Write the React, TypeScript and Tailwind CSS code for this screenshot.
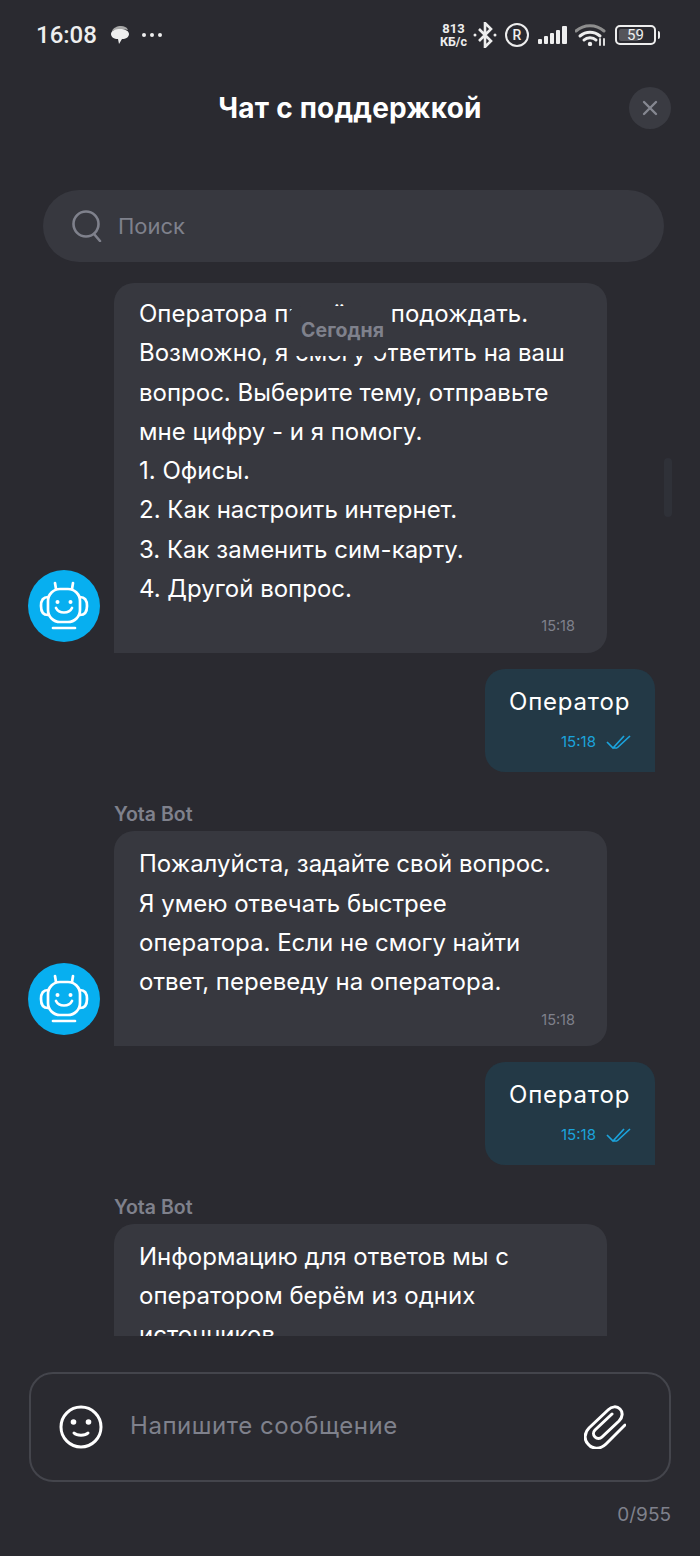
import React from 'react';

const FONT = "font-['Inter',sans-serif]";

const BotAvatar: React.FC = () => (
  <div className="w-[72px] h-[72px] rounded-full bg-[#07aff0] shrink-0">
    <svg width="72" height="72" viewBox="0 0 72 72" fill="none" stroke="white" strokeWidth="2.7" strokeLinecap="round">
      <path d="M27 13l1 6M45 13l-1 6" />
      <rect x="20" y="19" width="32" height="33" rx="12" />
      <path d="M20 27c-5 0-7 4-7 9s2 9 7 9M52 27c5 0 7 4 7 9s-2 9-7 9" />
      <circle cx="29.5" cy="32" r="2" fill="white" stroke="none" />
      <circle cx="42.5" cy="32" r="2" fill="white" stroke="none" />
      <path d="M28 38c3 6 13 6 16 0" />
      <path d="M25 58h22" />
    </svg>
  </div>
);

const BotMessage: React.FC<{ lines: string[]; time?: string; name?: boolean; clipped?: boolean; first?: boolean }> = ({ lines, time, name, clipped, first }) => (
  <div className="flex flex-col pl-[28px]">
    {name && <div className="ml-[86px] mb-[10px] h-[13px] leading-[13px] text-[19.5px] font-semibold text-[#7f818c]">Yota Bot</div>}
    <div className="flex items-end">
      <div className="w-[86px] shrink-0 pb-[11px]">{!clipped && <BotAvatar />}</div>
      <div className={`w-[493px] bg-[#37383f] pl-[25px] pr-[32px] rounded-tl-[20px] rounded-tr-[20px] rounded-br-[20px] ${first ? 'pt-[11px] pb-[17px]' : 'pt-[13px] pb-[16px]'} ${clipped ? 'pb-0' : ''}`}>
        {lines.map((l) => (
          <div key={l} className="text-[24px] leading-[39.3px] text-white whitespace-nowrap">{l}</div>
        ))}
        {time && <div className="text-right text-[14.5px] leading-[20px] mt-[8px] text-[#7f818c]">{time}</div>}
      </div>
    </div>
  </div>
);

const UserMessage: React.FC = () => (
  <div className="flex justify-end pr-[45px] mt-[16px]">
    <div className="w-[170px] h-[103px] bg-[#233946] rounded-tl-[20px] rounded-tr-[20px] rounded-bl-[20px] pl-[24px] pt-[13px]">
      <div className="text-[24px] leading-[39px] tracking-[0.8px] text-white">Оператор</div>
      <div className="flex items-center mt-[11px] ml-[52px] text-[15px] leading-[20px] text-[#1ba3dc]">
        15:18
        <svg className="ml-[10px]" width="26" height="16" viewBox="0 0 26 16" fill="none" stroke="#1ba3dc" strokeWidth="1.7">
          <path d="M1 8l6 6L18 2M11 14L24 2M7 14h4" />
        </svg>
      </div>
    </div>
  </div>
);

export default function App() {
  return (
    <div className={`relative w-[700px] h-[1556px] overflow-hidden bg-[#2a2a30] flex flex-col ${FONT}`}>
      {/* status bar */}
      <div className="h-[70px] flex items-center justify-between pl-[36px] pr-[40px] text-[#eeeeee] shrink-0">
        <div className="flex items-center font-['Roboto',sans-serif]">
          <span className="text-[24px] leading-none font-medium">16:08</span>
          <svg className="ml-[13px]" width="20" height="20" viewBox="0 0 20 20" fill="#eeeeee">
            <path d="M2 6c1-3 5-5 9-5 3 0 6 1 7 4-3-1-11-1-16 1z" fill="#a8a8a8" />
            <path d="M1 9c0-3 4-5 9-5s9 2 9 5-3 5-7 5l-3 5-1-5c-4 0-7-2-7-5z" />
          </svg>
          <span className="ml-[12px] flex gap-[4px]">
            <span className="w-[4px] h-[4px] rounded-full bg-[#eeeeee]" />
            <span className="w-[4px] h-[4px] rounded-full bg-[#eeeeee]" />
            <span className="w-[4px] h-[4px] rounded-full bg-[#eeeeee]" />
          </span>
        </div>
        <div className="flex items-center font-['Roboto',sans-serif]">
          <div className="flex flex-col items-center text-[13px] leading-[13px] font-bold">
            <span>813</span>
            <span className="text-[12.5px]">КБ/с</span>
          </div>
          <svg className="ml-[6px]" width="24" height="26" viewBox="0 0 24 26" fill="none" stroke="#eeeeee" strokeWidth="2.6">
            <path d="M6 7l12 12-6 6V1l6 6L6 19" />
            <circle cx="2" cy="13" r="1.5" fill="#eeeeee" stroke="none" />
            <circle cx="22" cy="13" r="1.5" fill="#eeeeee" stroke="none" />
          </svg>
          <div className="ml-[8px] w-[24px] h-[24px] rounded-full border-2 border-[#eeeeee] flex items-center justify-center text-[14px] font-medium">R</div>
          <svg className="ml-[9px]" width="29" height="18" viewBox="0 0 29 18" fill="#eeeeee">
            <rect x="0" y="13" width="4" height="5" rx="1" />
            <rect x="6" y="10" width="4" height="8" rx="1" />
            <rect x="12" y="7" width="4" height="11" rx="1" />
            <rect x="18" y="4" width="4" height="14" rx="1" />
            <rect x="24" y="0" width="5" height="18" rx="1" />
          </svg>
          <svg className="ml-[8px]" width="31" height="22" viewBox="0 0 31 22" fill="none" strokeLinecap="round">
            <path d="M1 7c8-7 20-7 28 0" stroke="#8d8d8d" strokeWidth="3" />
            <path d="M5 12c6-5 14-5 20 0M9 16c3-3 9-3 12 0" stroke="#eeeeee" strokeWidth="3" />
            <circle cx="15" cy="20" r="2.2" fill="#eeeeee" />
            <path d="M25 15v6M29 15v6" stroke="#eeeeee" strokeWidth="1.8" />
          </svg>
          <div className="ml-[9px] relative w-[41px] h-[20px] rounded-[5px] border-2 border-[#eeeeee] flex items-center justify-center">
            <div className="absolute left-[2px] top-[2px] bottom-[2px] w-[20px] rounded-[2px] bg-[#55555a]" />
            <span className="relative text-[15px] leading-none">59</span>
          </div>
          <div className="ml-[2px] w-[2px] h-[8px] rounded-r bg-[#eeeeee]" />
        </div>
      </div>

      {/* header */}
      <div className="h-[76px] flex items-center justify-center relative shrink-0">
        <h1 className="text-[28px] tracking-[0.2px] font-bold text-white leading-none">Чат с поддержкой</h1>
        <button className="absolute right-[29px] top-[17px] w-[42px] h-[42px] rounded-full bg-[#3a3b42] flex items-center justify-center">
          <svg width="16" height="16" viewBox="0 0 16 16" stroke="#858791" strokeWidth="2.4" strokeLinecap="round">
            <path d="M2 2l12 12M14 2L2 14" />
          </svg>
        </button>
      </div>

      {/* search */}
      <div className="mt-[44px] mr-[36px] ml-[43px] h-[72px] rounded-full bg-[#37383f] flex items-center pl-[29px] shrink-0">
        <svg width="30" height="32" viewBox="0 0 30 32" fill="none" stroke="#7f818c" strokeWidth="2.6" strokeLinecap="round">
          <circle cx="14" cy="14" r="12.5" />
          <path d="M22 24l6 7" />
        </svg>
        <span className="ml-[16px] text-[22px] text-[#7f818c]">Поиск</span>
      </div>

      {/* messages */}
      <div className="relative mt-[21px] h-[1053px] overflow-hidden shrink-0">
        <BotMessage
          first
          time="15:18"
          lines={[
            'Оператора придётся подождать.',
            'Возможно, я смогу ответить на ваш',
            'вопрос. Выберите тему, отправьте',
            'мне цифру - и я помогу.',
            '1. Офисы.',
            '2. Как настроить интернет.',
            '3. Как заменить сим-карту.',
            '4. Другой вопрос.',
          ]}
        />
        <UserMessage />
        <div className="mt-[36px]">
          <BotMessage
            name
            time="15:18"
            lines={['Пожалуйста, задайте свой вопрос.', 'Я умею отвечать быстрее', 'оператора. Если не смогу найти', 'ответ, переведу на оператора.']}
          />
        </div>
        <UserMessage />
        <div className="mt-[36px]">
          <BotMessage name clipped lines={['Информацию для ответов мы с', 'оператором берём из одних', 'источников.']} />
        </div>

        {/* date chip over the first bubble */}
        <div className="absolute left-[287px] top-[23px] w-[103px] h-[50px] pl-[8px] bg-[#37383f] rounded-tl-[14px] rounded-br-[14px] flex items-center justify-center text-[19.5px] font-bold text-[#7f818c]">
          Сегодня
        </div>
        {/* scrollbar */}
        <div className="absolute right-[28px] top-[175px] w-[8px] h-[59px] rounded-full bg-[#2f3138]" />
      </div>

      {/* composer */}
      <div className="mt-[36px] mx-[29px] h-[110px] rounded-[24px] border-2 border-[#44454c] flex items-center pl-[28px] pr-[43px] shrink-0">
        <svg width="44" height="44" viewBox="0 0 44 44" fill="none" stroke="white" strokeWidth="3" strokeLinecap="round">
          <circle cx="22" cy="22" r="20" />
          <circle cx="14.5" cy="17" r="2.8" fill="white" stroke="none" />
          <circle cx="29.5" cy="17" r="2.8" fill="white" stroke="none" />
          <path d="M15 28c3 3 11 3 14 0" />
        </svg>
        <span className="ml-[27px] pb-[3px] flex-1 text-[24px] tracking-[0.55px] text-[#7f818c]">Напишите сообщение</span>
        <svg width="42" height="44" viewBox="0 0 42 44" fill="none" stroke="white" strokeWidth="3" strokeLinecap="round">
          <path d="M41 20L22 39c-6 6-14 5-18 0-4-4-4-11 1-16L24 5c4-4 9-4 12-1 3 3 3 8-1 12L18 32c-2 2-5 2-7 0s-2-5 0-7L28 9" />
        </svg>
      </div>

      <div className="mt-[21px] pr-[29px] text-right text-[19px] leading-[24px] text-[#7f818c]">0/955</div>
    </div>
  );
}
